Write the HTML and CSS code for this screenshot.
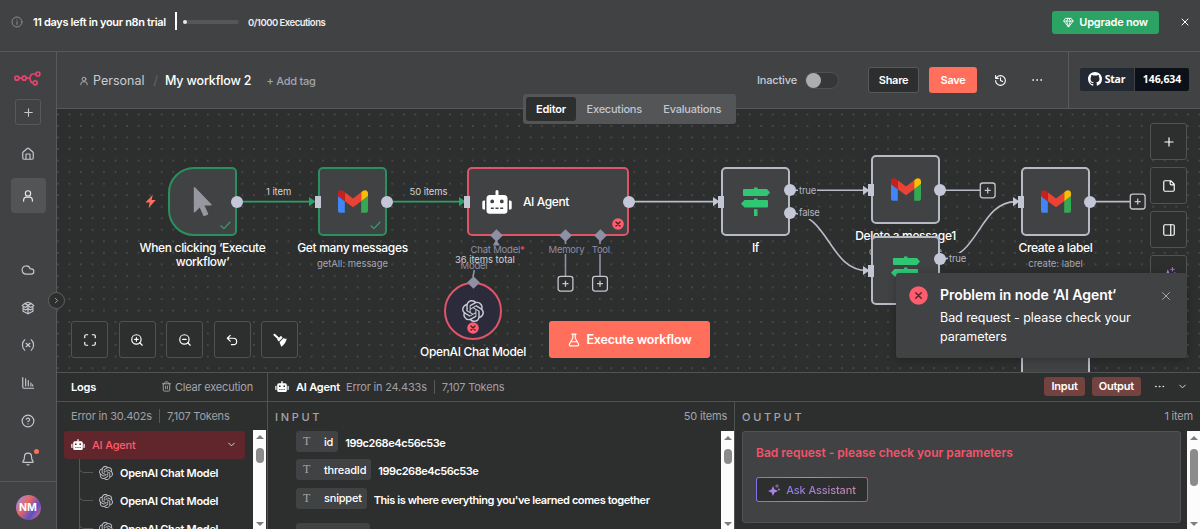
FILE: index.html
```
<!doctype html>
<html lang="en">
  <head>
    <meta charset="UTF-8" />
    <meta name="viewport" content="width=device-width, initial-scale=1.0" />
    <title>My workflow 2 - n8n</title>
    <link rel="stylesheet" href="styles.css" />
  </head>
  <body>
    <!-- shared icons -->
    <svg class="sprite" width="0" height="0">
      <symbol id="i-plus" viewBox="0 0 24 24"><path d="M5 12h14M12 5v14" /></symbol>
      <symbol id="i-x" viewBox="0 0 24 24"><path d="M18 6 6 18M6 6l12 12" /></symbol>
      <symbol id="i-chevron-down" viewBox="0 0 24 24"><path d="m6 9 6 6 6-6" /></symbol>
      <symbol id="i-chevron-right" viewBox="0 0 24 24"><path d="m9 18 6-6-6-6" /></symbol>
      <symbol id="i-dots" viewBox="0 0 24 24">
        <circle cx="12" cy="12" r="1" /><circle cx="20" cy="12" r="1" /><circle cx="4" cy="12" r="1" />
      </symbol>
      <symbol id="i-user" viewBox="0 0 24 24">
        <circle cx="12" cy="7.500" r="4.500" /><path d="M4.500 21v-2a5 5 0 0 1 5-5h5a5 5 0 0 1 5 5v2" />
      </symbol>
      <symbol id="i-gmail" viewBox="52 42 88 66">
        <path fill="#4285f4" d="M58 108h14V74L52 59v43c0 3.320 2.690 6 6 6" />
        <path fill="#34a853" d="M120 108h14c3.320 0 6-2.690 6-6V59l-20 15" />
        <path fill="#fbbc04" d="M120 48v26l20-15v-8c0-7.420-8.470-11.650-14.400-7.200" />
        <path fill="#ea4335" d="M72 74V48l24 18 24-18v26L96 92" />
        <path fill="#c5221f" d="M52 51v8l20 15V48l-5.600-4.200c-5.940-4.450-14.400-.220-14.400 7.200" />
      </symbol>
      <symbol id="i-sign" viewBox="0 0 29 30">
        <path
          fill="#2fc774"
          d="M13 2V.5h3.500V2h9.500l3 3.500L26 9H3a1 1 0 0 1-1-1V3a1 1 0 0 1 1-1zM13 13v-1.500h3.500V13h9.500a1 1 0 0 1 1 1v5.500a1 1 0 0 1-1 1H3.500L0 16.800 3.500 13zM13 22.200h3.500V29H13z"
        />
      </symbol>
      <symbol id="i-robot" viewBox="0 0 30 24">
        <path
          fill="#fff"
          fill-rule="evenodd"
          d="M13.500 1.500a1.500 1.500 0 0 1 3 0V5h5.500A3.500 3.500 0 0 1 25.500 8.500V20.500a3.300 3.300 0 0 1-3.300 3.300H7.800a3.300 3.300 0 0 1-3.300-3.300V8.500A3.500 3.500 0 0 1 8 5h5.500zM10.200 9.500a1.900 1.900 0 1 0 .01 3.800 1.900 1.900 0 0 0-.01-3.800zM19.800 9.500a1.900 1.900 0 1 0 .01 3.800 1.900 1.900 0 0 0-.01-3.800zM8.800 17.500v1.500h3v-1.500zM13.500 17.500v1.500h3v-1.500zM18.200 17.500v1.500h3v-1.500zM3 10.500v9H1.800A1.500 1.500 0 0 1 .3 18V12a1.500 1.500 0 0 1 1.500-1.500zM27 10.500v9h1.200a1.500 1.500 0 0 0 1.500-1.500V12a1.500 1.500 0 0 0-1.500-1.500z"
        />
      </symbol>
      <symbol id="i-openai" viewBox="0 0 24 24">
        <path
          fill="currentColor"
          stroke="none"
          d="M22.2819 9.8211a5.9847 5.9847 0 0 0-.5157-4.9108 6.0462 6.0462 0 0 0-6.5098-2.9A6.0651 6.0651 0 0 0 4.9807 4.1818a5.9847 5.9847 0 0 0-3.9977 2.9 6.0462 6.0462 0 0 0 .7427 7.0966 5.98 5.98 0 0 0 .511 4.9107 6.051 6.051 0 0 0 6.5146 2.9001A5.9847 5.9847 0 0 0 13.2599 24a6.0557 6.0557 0 0 0 5.7718-4.2058 5.9894 5.9894 0 0 0 3.9977-2.9001 6.0557 6.0557 0 0 0-.7475-7.0729zm-9.022 12.6081a4.4755 4.4755 0 0 1-2.8764-1.0408l.1419-.0804 4.7783-2.7582a.7948.7948 0 0 0 .3927-.6813v-6.7369l2.02 1.1686a.071.071 0 0 1 .038.052v5.5826a4.504 4.504 0 0 1-4.4945 4.4944zm-9.6607-4.1254a4.4708 4.4708 0 0 1-.5346-3.0137l.142.0852 4.783 2.7582a.7712.7712 0 0 0 .7806 0l5.8428-3.3685v2.3324a.0804.0804 0 0 1-.0332.0615L9.74 19.9502a4.4992 4.4992 0 0 1-6.1408-1.6464zM2.3408 7.8956a4.485 4.485 0 0 1 2.3655-1.9728V11.6a.7664.7664 0 0 0 .3879.6765l5.8144 3.3543-2.0201 1.1685a.0757.0757 0 0 1-.071 0l-4.8303-2.7865A4.504 4.504 0 0 1 2.3408 7.872zm16.5963 3.8558L13.1038 8.364 15.1192 7.2a.0757.0757 0 0 1 .071 0l4.8303 2.7913a4.4944 4.4944 0 0 1-.6765 8.1042v-5.6772a.79.79 0 0 0-.407-.667zm2.0107-3.0231l-.142-.0852-4.7735-2.7818a.7759.7759 0 0 0-.7854 0L9.409 9.2297V6.8974a.0662.0662 0 0 1 .0284-.0615l4.8303-2.7866a4.4992 4.4992 0 0 1 6.6802 4.66zM8.3065 12.863l-2.02-1.1638a.0804.0804 0 0 1-.038-.0567V6.0742a4.4992 4.4992 0 0 1 7.3757-3.4537l-.142.0805L8.704 5.459a.7948.7948 0 0 0-.3927.6813zm1.0976-2.3654l2.602-1.4998 2.6069 1.4998v2.9994l-2.5974 1.4997-2.6067-1.4997Z"
        />
      </symbol>
      <symbol id="i-error" viewBox="0 0 12 12">
        <circle cx="6" cy="6" r="5.800" fill="#ff5c6e" stroke="none" />
        <path stroke="#3a2326" stroke-width="1.300" d="m4 4 4 4M8 4 4 8" />
      </symbol>
      <symbol id="i-sparkles" viewBox="0 0 24 24">
        <path
          fill="url(#assist)"
          stroke="none"
          d="M10 4l2.300 5.700a3 3 0 0 0 2 2L20 14l-5.700 2.300a3 3 0 0 0-2 2L10 24l-2.300-5.700a3 3 0 0 0-2-2L0 14l5.700-2.300a3 3 0 0 0 2-2z"
        />
        <path stroke="#a77bc9" stroke-width="1.600" d="M18 1v6M15 4h6M22 9.500v3M20.500 11h3" />
      </symbol>
      <defs>
        <linearGradient id="assist" x1="0" x2="1"><stop offset="0" stop-color="#9474f5" /><stop offset="1" stop-color="#c58be0" /></linearGradient>
      </defs>
    </svg>

    <div class="app">
      <div class="banner">
        <svg class="icon banner-info" viewBox="0 0 24 24"><circle cx="12" cy="12" r="10" /><path d="M12 17v-5.500M12 7.500v.5" /></svg>
        <span class="banner-text">11 days left in your n8n trial</span>
        <span class="banner-sep"></span>
        <span class="banner-bar"><i></i></span>
        <span class="banner-count">0/1000 Executions</span>
        <button class="btn btn-upgrade">
          <svg class="icon" viewBox="0 0 24 24"><path d="M6 3h12l4 6-10 13L2 9zM11 3 8 9l4 13 4-13-3-6M2 9h20" /></svg>
          Upgrade now
        </button>
        <svg class="icon banner-close"><use href="#i-x" /></svg>
      </div>

      <div class="main">
        <nav class="sidebar">
          <svg class="logo" viewBox="0 0 27 15">
            <g fill="none" stroke="#e0456f" stroke-width="1.700">
              <circle cx="2.900" cy="7.200" r="2" /><circle cx="10.200" cy="7.200" r="2" />
              <circle cx="23.900" cy="3" r="2" /><circle cx="21.200" cy="11.800" r="2" />
              <path d="M4.900 7.200h3.300M12.200 7.200h2.300c2 0 1.800-1 2-2.100.3-1.400 1-2.100 2.300-2.100h3.100M14.500 7.200c2.200 0 1.800 1.400 2.100 2.600.2 1.300.8 2 2.600 2" />
            </g>
          </svg>
          <button class="side-add"><svg class="icon"><use href="#i-plus" /></svg></button>
          <div class="side-group">
            <a class="side-item"><svg class="icon" viewBox="0 0 24 24"><path d="M8.500 21v-8a1 1 0 0 1 1-1h5a1 1 0 0 1 1 1v8M3 10a2 2 0 0 1 .7-1.500l7-6a2 2 0 0 1 2.600 0l7 6A2 2 0 0 1 21 10v9a2 2 0 0 1-2 2H5a2 2 0 0 1-2-2z" /></svg></a>
            <a class="side-item active"><svg class="icon"><use href="#i-user" /></svg></a>
          </div>
          <div class="side-group side-bottom">
            <a class="side-item"><svg class="icon" viewBox="0 0 24 24"><path d="M17.500 19H9a7 7 0 1 1 6.700-9h1.800a4.500 4.500 0 1 1 0 9z" /></svg></a>
            <a class="side-item"><svg class="icon" viewBox="0 0 24 24"><path d="M12 2 6 4.500 12 7l6-2.500zM6 4.500 2 8l6 3 4-4 4 4 6-3-4-3.500M3.500 9v8.500L12 22l8.500-4.500V9M12 7v15M3.500 13 8 15.500l4-2.500 4 2.500 4.500-2.500" /></svg></a>
            <a class="side-item"><svg class="icon" viewBox="0 0 24 24"><path d="M6.500 3S2.500 6 2.500 12s4 9 4 9M17.500 3s4 3 4 9-4 9-4 9M15.200 9l-6.400 6M8.800 9l6.400 6" /></svg></a>
            <a class="side-item"><svg class="icon" viewBox="0 0 24 24"><path d="M3 2.500V19a2 2 0 0 0 2 2h16.500M8 17V5M12.500 17V8M17 17v-5M20 17v-2" /></svg></a>
            <a class="side-item"><svg class="icon" viewBox="0 0 24 24"><circle cx="12" cy="12" r="10" /><path d="M9 9a3 3 0 0 1 5.800 1c0 2-3 3-3 3M12 17v.1" /></svg></a>
            <a class="side-item bell"><svg class="icon" viewBox="0 0 24 24"><path d="M10.300 21.500a2 2 0 0 0 3.400 0M3.300 16a1 1 0 0 0 .7 1.700h16a1 1 0 0 0 .7-1.700C19.400 14.500 18 13 18 8A6 6 0 0 0 6 8c0 5-1.400 6.500-2.700 8" /></svg></a>
          </div>
          <div class="side-user"><span class="avatar">NM</span></div>
          <button class="side-toggle"><svg class="icon"><use href="#i-chevron-right" /></svg></button>
        </nav>

        <div class="content">
          <header class="header">
            <div class="crumbs">
              <svg class="icon"><use href="#i-user" /></svg>
              <span class="crumb">Personal</span>
              <span class="slash">/</span>
              <span class="crumb-name">My workflow 2</span>
              <span class="add-tag">+ Add tag</span>
            </div>
            <div class="actions">
              <span class="inactive">Inactive</span>
              <span class="switch"></span>
              <button class="btn btn-share">Share</button>
              <button class="btn btn-save">Save</button>
              <svg class="icon history" viewBox="0 0 24 24"><path d="M3 12a9 9 0 1 0 9-9 9.750 9.750 0 0 0-6.700 2.700L3 8M3 3v5h5M12 7v5l4 2" /></svg>
              <svg class="icon more"><use href="#i-dots" /></svg>
            </div>
            <div class="github">
              <span class="gh-star">
                <svg viewBox="0 0 16 16"><path fill="#fff" d="M8 0C3.580 0 0 3.580 0 8c0 3.540 2.290 6.530 5.470 7.590.4.070.55-.17.55-.38 0-.19-.01-.82-.01-1.490-2.010.37-2.530-.49-2.690-.94-.09-.23-.48-.94-.82-1.130-.28-.15-.68-.52-.01-.53.63-.01 1.080.58 1.230.82.72 1.210 1.870.87 2.330.66.070-.52.28-.87.51-1.070-1.780-.2-3.640-.89-3.640-3.950 0-.87.31-1.590.82-2.150-.08-.2-.36-1.020.08-2.120 0 0 .67-.21 2.200.82.64-.18 1.320-.27 2-.27s1.360.09 2 .27c1.530-1.040 2.200-.82 2.200-.82.44 1.100.16 1.920.08 2.120.51.56.82 1.270.82 2.150 0 3.070-1.870 3.750-3.650 3.950.29.25.54.73.54 1.480 0 1.070-.01 1.930-.01 2.200 0 .21.15.46.55.38A8.010 8.010 0 0 0 16 8c0-4.420-3.580-8-8-8z" /></svg>
                Star
              </span>
              <span class="gh-count">146,634</span>
            </div>
          </header>

          <div class="tabs">
            <span class="tab active">Editor</span>
            <span class="tab">Executions</span>
            <span class="tab">Evaluations</span>
          </div>

          <section class="canvas">
            <!-- the viewBox uses window coordinates -->
            <svg class="edges" viewBox="57 109 1143 263">
              <defs>
                <pattern id="dots" x="52.200" y="108.700" width="11.530" height="11.530" patternUnits="userSpaceOnUse">
                  <circle cx="5.700" cy="5.700" r="0.700" fill="#6b6b6c" />
                </pattern>
              </defs>
              <rect x="57" y="109" width="1143" height="263" fill="url(#dots)" />
              <g class="edge done">
                <path d="M237 201.600h74M387 201.600h74" />
                <path class="arrow" d="M309 197v9.200l6.500-4.600zM459 197v9.200l6.500-4.600z" />
              </g>
              <g class="edge">
                <path d="M629 201.600h86M790 190.300h76M790 213C829 213 829 270.500 867 270.500M940 190.300h40M940 259.200C979 259.200 979 201.600 1016 201.600M1090 201.600h40" />
                <path class="arrow" d="M713 197v9.200l6.500-4.600zM863 185.700v9.200l6.500-4.600zM863 265.900v9.200l6.500-4.600zM1013 197v9.200l6.500-4.600z" />
              </g>
              <g class="edge sub">
                <path d="M565.500 240v36M600 240v36M473 277l1.300-7" />
                <path class="arrow" d="M492.800 245.500h7l-3.500-6z" />
              </g>
              <g class="mask">
                <rect x="798" y="184" width="19" height="12" /><rect x="798" y="207" width="21" height="12" />
                <rect x="948" y="253" width="18" height="12" />
                <rect x="547" y="244" width="37" height="10" /><rect x="590" y="244" width="20" height="10" />
              </g>
              <g class="plus-end">
                <rect x="980.300" y="183" width="14.800" height="14.800" rx="2.500" /><path d="M984.700 190.400h6M987.700 187.400v6" />
                <rect x="1130.300" y="194.200" width="14.800" height="14.800" rx="2.500" /><path d="M1134.700 201.600h6M1137.700 198.600v6" />
                <rect x="558.100" y="276.300" width="14.800" height="14.800" rx="2.500" /><path d="M562.500 283.700h6M565.500 280.700v6" />
                <rect x="592.600" y="276.300" width="14.800" height="14.800" rx="2.500" /><path d="M597 283.700h6M600 280.700v6" />
              </g>
              <g class="edge-text">
                <text x="266" y="195">1 item</text>
                <text x="409.500" y="195">50 items</text>
                <text x="455" y="262.500">36 items total</text>
              </g>
              <g class="port-text">
                <text x="799" y="193.500">true</text>
                <text x="799" y="216.300">false</text>
                <text x="949" y="262.300">true</text>
                <text class="dim" x="470.500" y="252.500">Chat Model<tspan fill="#ff4d62">*</tspan></text>
                <text class="dim" x="548.500" y="252.500">Memory</text>
                <text class="dim" x="591.700" y="252.500">Tool</text>
                <text class="dim" x="460.500" y="269.300">Model</text>
              </g>
              <path fill="#ff6f5c" d="M152.800 194.800 145.500 202.600h4.200l-1.200 5.500 7.300-8h-4.200z" />
            </svg>

            <div class="node trigger n-start ok">
              <svg class="cursor" viewBox="0 0 19 30"><path fill="#97979f" d="M.8.8a.7.7 0 0 1 1.200-.5L18.400 17.300a.7.7 0 0 1-.5 1.200H11.500l3.600 7.900a1 1 0 0 1-.5 1.300l-3 1.300a1 1 0 0 1-1.300-.5L6.700 20.500 2 25.200a.7.7 0 0 1-1.200-.5z" /></svg>
              <svg class="icon check" viewBox="0 0 12 10"><path d="m1 5.500 3.300 3L11 1.300" /></svg>
              <span class="out"></span>
              <p class="name">When clicking ‘Execute workflow’</p>
            </div>
            <div class="node n-get ok">
              <svg class="gmail"><use href="#i-gmail" /></svg>
              <svg class="icon check" viewBox="0 0 12 10"><path d="m1 5.500 3.300 3L11 1.300" /></svg>
              <span class="in"></span><span class="out"></span>
              <p class="name">Get many messages<small>getAll: message</small></p>
            </div>
            <div class="node n-agent failed">
              <svg class="robot"><use href="#i-robot" /></svg>
              <span class="agent-name">AI Agent</span>
              <svg class="icon err"><use href="#i-error" /></svg>
              <span class="in"></span><span class="out"></span>
              <span class="diamond d1"></span><span class="diamond d2"></span><span class="diamond d3"></span>
            </div>
            <div class="node n-openai failed">
              <svg class="openai"><use href="#i-openai" /></svg>
              <svg class="icon err"><use href="#i-error" /></svg>
              <span class="diamond top"></span>
              <p class="name">OpenAI Chat Model</p>
            </div>
            <div class="node n-if">
              <svg class="sign"><use href="#i-sign" /></svg>
              <span class="in"></span><span class="out first"></span><span class="out second"></span>
              <p class="name">If</p>
            </div>
            <div class="node n-delete">
              <svg class="gmail"><use href="#i-gmail" /></svg>
              <span class="in"></span><span class="out"></span>
              <p class="name">Delete a message1<small>delete: message</small></p>
            </div>
            <div class="node n-if2">
              <svg class="sign"><use href="#i-sign" /></svg>
              <span class="in"></span><span class="out first"></span>
            </div>
            <div class="node n-label">
              <svg class="gmail"><use href="#i-gmail" /></svg>
              <span class="in"></span><span class="out"></span>
              <p class="name">Create a label<small>create: label</small></p>
            </div>
            <div class="node n-last"></div>

            <div class="controls">
              <button class="tool"><svg class="icon" viewBox="0 0 24 24"><path d="M3 8V5a2 2 0 0 1 2-2h3M16 3h3a2 2 0 0 1 2 2v3M21 16v3a2 2 0 0 1-2 2h-3M8 21H5a2 2 0 0 1-2-2v-3" /></svg></button>
              <button class="tool"><svg class="icon" viewBox="0 0 24 24"><circle cx="11" cy="11" r="8" /><path d="m21 21-4.300-4.300M11 8v6M8 11h6" /></svg></button>
              <button class="tool"><svg class="icon" viewBox="0 0 24 24"><circle cx="11" cy="11" r="8" /><path d="m21 21-4.300-4.300M8 11h6" /></svg></button>
              <button class="tool"><svg class="icon" viewBox="0 0 24 24"><path d="M9 14 4 9l5-5M4 9h10.500a5.500 5.500 0 0 1 0 11H11" /></svg></button>
              <button class="tool">
                <svg class="icon" viewBox="0 0 24 24">
                  <path stroke-width="3.500" d="m2.500 3 6 5.500" />
                  <path fill="currentColor" stroke="none" d="M7 11.500 13.500 4.500l3 3.500-6.500 6.500zM11.200 15.800 17.800 9.200c1.500.8 3.700.8 5.700.3-.8 6-4.500 11-9.500 14-.8-2.700-1.500-5.200-2.800-7.700z" />
                </svg>
              </button>
            </div>
            <button class="btn btn-execute">
              <svg class="icon" viewBox="0 0 24 24"><path d="M14 2v6a2 2 0 0 0 .2 1l5.600 10a2 2 0 0 1-1.800 3H6a2 2 0 0 1-1.800-3L9.800 9a2 2 0 0 0 .2-1V2M8.500 2h7M6.500 15h11" /></svg>
              Execute workflow
            </button>
            <div class="side-tools">
              <button class="tool"><svg class="icon"><use href="#i-plus" /></svg></button>
              <button class="tool"><svg class="icon" viewBox="0 0 24 24"><path d="M15 3H5a2 2 0 0 0-2 2v14a2 2 0 0 0 2 2h14a2 2 0 0 0 2-2V9zM14 3v5a2 2 0 0 0 2 2h5" /></svg></button>
              <button class="tool"><svg class="icon" viewBox="0 0 24 24"><rect x="3" y="3" width="18" height="18" rx="2" /><path d="M15 3v18" /></svg></button>
              <button class="tool"><svg class="icon"><use href="#i-sparkles" /></svg></button>
            </div>
          </section>

          <section class="logs">
            <div class="log-tree">
              <div class="log-head">
                <b>Logs</b>
                <span class="clear"><svg class="icon" viewBox="0 0 24 24"><path d="M3 6h18M19 6v14a2 2 0 0 1-2 2H7a2 2 0 0 1-2-2V6M8 6V4a2 2 0 0 1 2-2h4a2 2 0 0 1 2 2v2M10 11v6M14 11v6" /></svg>Clear execution</span>
              </div>
              <div class="log-stats"><span>Error in 30.402s</span><span class="bar"></span><span>7,107 Tokens</span></div>
              <div class="tree-wrap">
                <div class="tree">
                  <div class="tree-row root">
                    <svg class="robot-sm"><use href="#i-robot" /></svg>AI Agent
                    <svg class="icon chev"><use href="#i-chevron-down" /></svg>
                  </div>
                  <div class="tree-row child"><svg class="openai-sm"><use href="#i-openai" /></svg>OpenAI Chat Model</div>
                  <div class="tree-row child"><svg class="openai-sm"><use href="#i-openai" /></svg>OpenAI Chat Model</div>
                  <div class="tree-row child"><svg class="openai-sm"><use href="#i-openai" /></svg>OpenAI Chat Model</div>
                </div>
                <div class="scroll"><i></i></div>
              </div>
            </div>

            <div class="log-detail">
              <div class="log-head">
                <svg class="robot-sm"><use href="#i-robot" /></svg>
                <b>AI Agent</b>
                <span class="muted">Error in 24.433s</span><span class="bar"></span><span class="muted">7,107 Tokens</span>
                <span class="toggle first">Input</span>
                <span class="toggle">Output</span>
                <svg class="icon more"><use href="#i-dots" /></svg>
                <svg class="icon chev"><use href="#i-chevron-down" /></svg>
              </div>
              <div class="panes">
                <div class="pane pane-in">
                  <div class="pane-head"><h3>INPUT</h3><span>50 items</span></div>
                  <div class="pane-body">
                    <div class="fields">
                      <div class="field"><span class="key"><i>T</i>id</span><span class="val">199c268e4c56c53e</span></div>
                      <div class="field"><span class="key"><i>T</i>threadId</span><span class="val">199c268e4c56c53e</span></div>
                      <div class="field"><span class="key"><i>T</i>snippet</span><span class="val">This is where everything you've learned comes together</span></div>
                      <div class="field cut"><span class="key"></span></div>
                    </div>
                    <div class="scroll"><i></i></div>
                  </div>
                </div>
                <div class="pane pane-out">
                  <div class="pane-head"><h3>OUTPUT</h3><span>1 item</span></div>
                  <div class="pane-body">
                    <div class="error-box">
                      <p>Bad request - please check your parameters</p>
                      <button class="ask"><svg class="icon"><use href="#i-sparkles" /></svg><span>Ask Assistant</span></button>
                    </div>
                    <div class="scroll tall"><i></i></div>
                  </div>
                </div>
              </div>
            </div>
          </section>
        </div>
      </div>

      <div class="toast">
        <svg class="icon toast-icon" viewBox="0 0 19 19">
          <circle cx="9.500" cy="9.500" r="9.300" fill="#ff5c6e" stroke="none" />
          <path stroke="#4a2a2f" stroke-width="1.400" d="m6.700 6.700 5.600 5.600M12.300 6.700l-5.600 5.600" />
        </svg>
        <div class="toast-text">
          <h2>Problem in node ‘AI Agent‘</h2>
          <p>Bad request - please check your parameters</p>
        </div>
        <svg class="icon toast-close"><use href="#i-x" /></svg>
      </div>
    </div>
  </body>
</html>
```
FILE: styles.css
```
* {
  box-sizing: border-box;
}
body {
  margin: 0;
  font-family: Inter, "Liberation Sans", sans-serif;
  font-size: 11px;
  color: #fff;
  background-color: #2d2e2e;
  overflow: hidden;
}
p,
h2,
h3 {
  margin: 0;
}
button {
  font-family: inherit;
  color: inherit;
  padding: 0;
  border: none;
  background: none;
}
svg {
  display: block;
  flex-shrink: 0;
}
.sprite {
  position: absolute;
}
.icon {
  width: 14px;
  height: 14px;
  fill: none;
  stroke: currentColor;
  stroke-width: 2;
  stroke-linecap: round;
  stroke-linejoin: round;
}
.app {
  position: relative;
  width: 1200px;
  height: 529px;
  display: flex;
  flex-direction: column;
  white-space: nowrap;
}

/* trial banner */
.banner {
  height: 52px;
  display: flex;
  align-items: center;
  padding: 0 9px 7px 11px;
  background-color: #414244;
  border-bottom: 1px solid #58595b;
}
.banner-info {
  width: 12px;
  height: 12px;
  color: #8b8c90;
}
.banner-text {
  width: 135px;
  margin-left: 10px;
  font-size: 11px;
  font-weight: 600;
  letter-spacing: -0.35px;
}
.banner-sep {
  width: 2px;
  height: 18px;
  margin: -3px 6px 0 7px;
  background-color: #fff;
}
.banner-bar {
  width: 56px;
  height: 4px;
  border-radius: 2px;
  background-color: #555658;
}
.banner-bar i {
  display: block;
  width: 4px;
  height: 4px;
  border-radius: 50%;
  background-color: #e8e8e8;
}
.banner-count {
  margin-left: 9px;
  font-size: 9.5px;
  font-weight: 600;
  letter-spacing: -0.5px;
  color: #ededf0;
}
.btn {
  display: flex;
  align-items: center;
  justify-content: center;
  border-radius: 3px;
  font-weight: 600;
}
.btn-upgrade {
  width: 107px;
  height: 23px;
  margin-left: auto;
  gap: 5px;
  background-color: #2ba364;
  font-size: 11px;
  letter-spacing: -0.25px;
}
.btn-upgrade .icon {
  width: 11px;
  height: 11px;
}
.banner-close {
  width: 12px;
  height: 12px;
  margin-left: 20px;
}

.main {
  flex: 1;
  min-height: 0;
  display: flex;
}

/* sidebar */
.sidebar {
  position: relative;
  width: 57px;
  display: flex;
  flex-direction: column;
  align-items: center;
  padding-top: 19px;
  background-color: #414244;
  border-right: 1px solid #58595b;
  color: #c6c8cf;
}
.logo {
  width: 27px;
  height: 15px;
  margin-right: 1px;
}
.side-add {
  width: 26px;
  height: 26px;
  margin-top: 13px;
  display: flex;
  align-items: center;
  justify-content: center;
  border: 1px solid #58595b;
  border-radius: 3px;
}
.side-add .icon {
  width: 13px;
  height: 13px;
}
.side-group {
  display: flex;
  flex-direction: column;
  align-items: center;
  margin-top: 11px;
  gap: 7px;
}
.side-item {
  position: relative;
  width: 35px;
  height: 35px;
  display: flex;
  align-items: center;
  justify-content: center;
  border-radius: 4px;
}
.side-item.active {
  background-color: #535456;
  color: #e6e6ea;
}
.side-bottom {
  margin-top: auto;
  gap: 2.7px;
  padding-bottom: 5px;
}
.bell::after {
  content: "";
  position: absolute;
  top: 8px;
  right: 7px;
  width: 5px;
  height: 5px;
  border-radius: 50%;
  background-color: #ff6f5c;
}
.side-user {
  align-self: stretch;
  height: 48px;
  display: flex;
  justify-content: center;
  padding-top: 13px;
  border-top: 1px solid #58595b;
}
.avatar {
  width: 25px;
  height: 25px;
  border-radius: 50%;
  background: linear-gradient(125deg, #a08be0 10%, #e8675f 38%, #5b50c8 68%, #e06a7c 95%);
  color: #fff;
  font-size: 10.5px;
  font-weight: 700;
  line-height: 25px;
  text-align: center;
}
.side-toggle {
  position: absolute;
  top: 240px;
  right: -9px;
  z-index: 3;
  width: 17px;
  height: 17px;
  display: flex;
  align-items: center;
  justify-content: center;
  border: 1px solid #606163;
  border-radius: 50%;
  background-color: #2d2e2e;
}
.side-toggle .icon {
  width: 9px;
  height: 9px;
}

.content {
  position: relative;
  flex: 1;
  min-width: 0;
  display: flex;
  flex-direction: column;
}

/* header */
.header {
  height: 57px;
  display: flex;
  padding-left: 22px;
  background-color: #414244;
  border-bottom: 1px solid #58595b;
}
.crumbs,
.actions,
.github {
  display: flex;
  align-items: center;
}
.crumbs {
  padding-top: 1px;
  font-size: 12.5px;
}
.crumbs .icon {
  width: 10px;
  height: 10px;
  color: #c0c2ca;
}
.crumb {
  margin-left: 4px;
  color: #c9cbd3;
}
.slash {
  margin: 0 7px 0 9px;
  color: #65666a;
}
.crumb-name {
  font-weight: 500;
  letter-spacing: -0.15px;
}
.add-tag {
  margin-left: 15px;
  font-size: 11px;
  font-weight: 500;
  letter-spacing: -0.25px;
  color: #a4a5ad;
}
.actions {
  margin-left: auto;
  padding-right: 25px;
}
.inactive {
  font-size: 11px;
  font-weight: 500;
  letter-spacing: -0.15px;
  color: #c9cbd3;
}
.switch {
  width: 34px;
  height: 17px;
  margin: 0 29px 0 8px;
  border: 1px solid #505153;
  border-radius: 9px;
  background-color: #363738;
}
.switch::before {
  content: "";
  display: block;
  width: 15px;
  height: 15px;
  border-radius: 50%;
  background-color: #aeaeb2;
}
.btn-share {
  width: 51px;
  height: 26px;
  border: 1px solid #58595b;
  background-color: #2d2e2e;
  font-size: 11px;
  letter-spacing: -0.3px;
}
.btn-save {
  width: 48px;
  height: 26px;
  margin-left: 10px;
  background-color: #ff6f5c;
  font-size: 11px;
  letter-spacing: -0.3px;
}
.history {
  width: 13px;
  height: 13px;
  margin-left: 17px;
}
.actions .more {
  width: 12px;
  height: 12px;
  margin-left: 24px;
  stroke-width: 1.5;
}
.github {
  width: 132px;
  padding: 0 0 2px 11px;
  border-left: 1px solid #58595b;
  font-family: "Open Sans", sans-serif;
  font-size: 10.5px;
  font-weight: 700;
}
.gh-star,
.gh-count {
  height: 23px;
  display: flex;
  align-items: center;
  justify-content: center;
}
.gh-star {
  width: 54px;
  gap: 3px;
  padding-right: 1px;
  border-radius: 2px 0 0 2px;
  background-color: #222932;
  letter-spacing: -0.3px;
}
.gh-star svg {
  width: 14px;
  height: 14px;
}
.gh-count {
  width: 54px;
  margin-left: 1px;
  border-radius: 0 2px 2px 0;
  background-color: #0c1018;
  letter-spacing: -0.1px;
}

/* the switcher sits over the header's lower edge */
.tabs {
  position: absolute;
  top: 42px;
  left: 466px;
  z-index: 2;
  width: 213px;
  height: 30px;
  display: flex;
  padding: 3px;
  border-radius: 3px;
  background-color: #535557;
}
.tab {
  padding: 0 10.7px;
  border-radius: 3px;
  font-size: 11px;
  font-weight: 500;
  letter-spacing: -0.23px;
  line-height: 24px;
  color: #c3c5d0;
}
.tab.active {
  padding: 0 10px;
  background-color: #2d2e2e;
  color: #fff;
  font-weight: 600;
}

/* canvas */
.canvas {
  position: relative;
  height: 263px;
  overflow: hidden;
}
.edges {
  width: 1143px;
  height: 263px;
}
.edge path {
  fill: none;
  stroke: #b9bcc9;
  stroke-width: 1.6;
}
.edge.done path {
  stroke: #2aa168;
}
.edge.sub path {
  stroke: #8f90a6;
}
.edge .arrow {
  stroke: none;
  fill: #c3c7d3;
}
.edge.done .arrow {
  stroke: none;
  fill: #2aa168;
}
.edge.sub .arrow {
  stroke: none;
  fill: #8f90a6;
}
.mask rect {
  fill: #2d2e2e;
}
.plus-end {
  fill: #2d2e2e;
  stroke: #c3c5cf;
  stroke-width: 1.3;
}
.edge-text {
  font-size: 9.5px;
  letter-spacing: -0.08px;
  fill: #d3d4d9;
}
.port-text {
  font-size: 9.5px;
  letter-spacing: -0.2px;
  fill: #b4b6c0;
}
.port-text .dim {
  fill: #8e8fa3;
}
.node {
  position: absolute;
  width: 69px;
  height: 69px;
  display: flex;
  align-items: center;
  justify-content: center;
  border: 2px solid #b6bac5;
  border-radius: 5px;
  background-color: #414244;
}
.node.ok {
  border-color: #2c8f60;
}
.node.failed {
  border-color: #dc5568;
}
.n-start {
  left: 111px;
  top: 58px;
}
.n-get {
  left: 261px;
  top: 58px;
}
.n-agent {
  left: 410px;
  top: 58px;
  width: 162px;
  justify-content: flex-start;
  padding-left: 13px;
}
.n-openai {
  left: 387px;
  top: 173px;
  width: 58px;
  height: 58px;
  background-color: #2b2b3b;
}
.node.n-openai {
  border-radius: 50%;
}
.n-if {
  left: 664px;
  top: 58px;
}
.n-delete {
  left: 814px;
  top: 46px;
}
.n-if2 {
  left: 814px;
  top: 127px;
}
.n-label {
  left: 964px;
  top: 58px;
}
.n-last {
  left: 964px;
  top: 200px;
}
.node.trigger {
  border-radius: 26px 5px 5px 26px;
}
.cursor {
  width: 19px;
  height: 30px;
}
.gmail {
  width: 30px;
  height: 23px;
}
.sign {
  width: 29px;
  height: 30px;
}
.robot {
  width: 30px;
  height: 24px;
}
.openai {
  width: 22px;
  height: 22px;
  color: #c8cad6;
}
.agent-name {
  margin-left: 11px;
  font-size: 12px;
  font-weight: 500;
  letter-spacing: -0.4px;
}
.check {
  position: absolute;
  right: 4px;
  bottom: 4px;
  width: 11px;
  height: 9px;
  stroke-width: 1.4;
  color: #2fa56c;
}
.err {
  position: absolute;
  right: 3px;
  bottom: 4px;
  width: 12px;
  height: 12px;
}
.n-openai .err {
  right: 21px;
  bottom: 4px;
}
.in {
  position: absolute;
  left: -5px;
  top: 27px;
  width: 6px;
  height: 12px;
  background-color: #c3c7d3;
}
.out {
  position: absolute;
  right: -8px;
  top: 27px;
  width: 12px;
  height: 12px;
  border-radius: 50%;
  background-color: #c3c7d8;
}
.out.first {
  top: 15px;
}
.out.second {
  top: 38px;
}
.diamond {
  position: absolute;
  bottom: -6px;
  width: 9px;
  height: 9px;
  background-color: #8f90a6;
  transform: rotate(45deg);
}
.d1 {
  left: 23px;
}
.d2 {
  left: 92px;
}
.d3 {
  left: 126.5px;
}
.diamond.top {
  top: -6px;
}
.name {
  position: absolute;
  top: 72px;
  left: 50%;
  width: 140px;
  margin-left: -70px;
  font-size: 12px;
  font-weight: 500;
  letter-spacing: -0.34px;
  line-height: 14px;
  text-align: center;
  white-space: normal;
}
.n-openai .name {
  top: 61px;
}
.name small {
  display: block;
  margin-top: 2px;
  font-size: 9.5px;
  font-weight: 400;
  letter-spacing: -0.05px;
  color: #a4a6b0;
}
.tool {
  width: 37px;
  height: 37px;
  display: flex;
  align-items: center;
  justify-content: center;
  border: 1px solid #515253;
  border-radius: 3px;
  background-color: #2d2e2e;
}
.controls {
  position: absolute;
  left: 14px;
  bottom: 14px;
  display: flex;
  gap: 10.5px;
}
.side-tools {
  position: absolute;
  top: 14px;
  right: 13px;
  display: flex;
  flex-direction: column;
  gap: 7px;
}
.btn-execute {
  position: absolute;
  left: 492px;
  bottom: 14px;
  width: 161px;
  height: 37px;
  gap: 5px;
  background-color: #ff6f5c;
  font-size: 12.5px;
  letter-spacing: -0.17px;
}

/* logs */
.logs {
  flex: 1;
  min-height: 0;
  display: flex;
  border-top: 1px solid #515254;
  letter-spacing: -0.2px;
}
.log-head {
  height: 29px;
  display: flex;
  align-items: center;
  padding-bottom: 1px;
  border-bottom: 1px solid #515254;
}
.log-head b {
  font-weight: 600;
}
.log-tree {
  width: 211px;
  display: flex;
  flex-direction: column;
  border-right: 1px solid #515254;
}
.log-tree .log-head {
  justify-content: space-between;
  padding: 0 14px 1px;
}
.clear {
  display: flex;
  align-items: center;
  gap: 3px;
  color: #a4a5ac;
}
.clear .icon {
  width: 11px;
  height: 11px;
}
.log-stats {
  height: 28px;
  display: flex;
  align-items: center;
  padding: 0 0 1px 14px;
  color: #9fa0a7;
}
.bar {
  width: 1px;
  height: 14px;
  margin: 0 7px;
  background-color: #58595b;
}
.tree-wrap {
  flex: 1;
  min-height: 0;
  display: flex;
  justify-content: space-between;
  padding-right: 1px;
}
.tree {
  width: 181px;
  margin-left: 7px;
  padding-top: 1px;
  overflow: hidden;
}
.tree-row {
  position: relative;
  height: 28px;
  display: flex;
  align-items: center;
  padding-bottom: 1px;
  font-weight: 600;
  letter-spacing: -0.3px;
}
.tree-row.root {
  gap: 7px;
  padding: 0 8px 1px 7px;
  border-radius: 3px;
  background-color: #60262b;
  color: #ff5c6e;
  font-weight: 500;
  letter-spacing: -0.2px;
}
.robot-sm {
  width: 14px;
  height: 11px;
}
.chev {
  width: 11px;
  height: 11px;
  margin-left: auto;
  color: #e0e0e4;
}
.child {
  gap: 7px;
  padding-left: 35px;
}
.child::before {
  content: "";
  position: absolute;
  left: 15px;
  top: 0;
  height: 28px;
  border-left: 1px solid #55565a;
}
.child::after {
  content: "";
  position: absolute;
  left: 15px;
  top: 4px;
  width: 13px;
  height: 9px;
  border-left: 1px solid #55565a;
  border-bottom: 1px solid #55565a;
  border-bottom-left-radius: 5px;
}
.openai-sm {
  width: 14px;
  height: 14px;
  color: #c0c1c8;
}
.scroll {
  position: relative;
  width: 13px;
  padding: 18px 2.5px 0;
  background-color: #fcfcfc;
}
.scroll i {
  display: block;
  height: 15px;
  border-radius: 4px;
  background-color: #8b8b8b;
}
.scroll.tall i {
  height: 37px;
}
.scroll::before,
.scroll::after {
  content: "";
  position: absolute;
  left: 2.5px;
  border: 4px solid transparent;
}
.scroll::before {
  top: 1px;
  border-bottom-color: #7d7d7d;
}
.scroll::after {
  bottom: -1px;
  border-top-color: #7d7d7d;
}

.log-detail {
  flex: 1;
  min-width: 0;
  display: flex;
  flex-direction: column;
}
.log-detail .log-head {
  padding: 0 12px 1px 7px;
}
.log-detail .log-head b {
  margin: 0 6px 0 7px;
}
.muted {
  color: #9fa0a7;
}
.toggle {
  height: 19px;
  padding: 0 7px;
  margin-left: 7px;
  border-radius: 3px;
  background-color: #74433f;
  font-weight: 600;
  line-height: 19px;
}
.toggle.first {
  margin-left: auto;
}
.log-head .more {
  width: 11px;
  height: 11px;
  margin-left: 13px;
  stroke-width: 1.5;
}
.log-detail .chev {
  margin-left: 12px;
}
.panes {
  flex: 1;
  min-height: 0;
  display: flex;
}
.pane {
  display: flex;
  flex-direction: column;
}
.pane-in {
  width: 467px;
  border-right: 1px solid #515254;
}
.pane-out {
  flex: 1;
}
.pane-head {
  height: 29px;
  display: flex;
  align-items: center;
  justify-content: space-between;
  padding: 0 7px 1px;
  color: #a4a5ac;
}
.pane-head h3 {
  padding-top: 2px;
  font-size: 11px;
  font-weight: 500;
  letter-spacing: 2.7px;
}
.pane-body {
  flex: 1;
  min-height: 0;
  display: flex;
  justify-content: space-between;
}
.fields {
  padding-left: 28px;
}
.field {
  height: 28.3px;
  display: flex;
  align-items: flex-start;
  font-weight: 500;
}
.key {
  height: 21px;
  display: flex;
  align-items: center;
  padding-right: 5px;
  border-radius: 3px;
  background-color: #414244;
}
.key i {
  width: 28px;
  padding-left: 7px;
  font-family: "Liberation Serif", serif;
  font-style: normal;
  font-weight: 400;
  font-size: 12px;
  color: #a4a5ac;
}
.val {
  margin: 5px 0 0 7px;
  font-weight: 600;
  letter-spacing: -0.43px;
}
.field.cut .key {
  width: 74px;
  margin-top: 7px;
}
.pane-out .pane-body {
  padding-left: 7px;
}
.error-box {
  width: 439px;
  height: 92px;
  padding: 13px;
  border: 1px solid #515254;
  border-radius: 3px;
  background-color: #414244;
}
.error-box p {
  font-size: 12px;
  font-weight: 600;
  letter-spacing: 0;
  color: #f2546b;
}
.ask {
  width: 112px;
  height: 25px;
  margin-top: 17px;
  display: flex;
  align-items: center;
  justify-content: center;
  gap: 6px;
  border: 1px solid transparent;
  border-radius: 3px;
  background:
    linear-gradient(#2d2e2e, #2d2e2e) padding-box,
    linear-gradient(90deg, #7f72e8, #a98bc0 50%, #c4506a) border-box;
  font-size: 11px;
  font-weight: 500;
  letter-spacing: -0.15px;
}
.ask .icon {
  width: 12px;
  height: 12px;
}
.ask span {
  color: transparent;
  background: linear-gradient(90deg, #8c7bf0, #b782c4 65%, #c985a8);
  background-clip: text;
}

/* error toast over the canvas */
.toast {
  position: absolute;
  left: 896px;
  top: 273px;
  z-index: 4;
  width: 291px;
  height: 85px;
  display: flex;
  padding: 13px 14px 0 13px;
  border-radius: 3px;
  background-color: #414244;
  box-shadow: 0 2px 8px rgba(0, 0, 0, 0.25);
}
.toast-icon {
  width: 19px;
  height: 19px;
}
.toast-text {
  flex: 1;
  margin-left: 12px;
}
.toast h2 {
  font-size: 14px;
  font-weight: 600;
  letter-spacing: -0.05px;
  line-height: 18px;
}
.toast p {
  width: 200px;
  margin-top: 5px;
  font-size: 12.5px;
  letter-spacing: -0.05px;
  line-height: 18.5px;
  white-space: normal;
}
.toast-close {
  margin-top: 3px;
  stroke-width: 1.5;
  color: #b4b5ba;
}
```
